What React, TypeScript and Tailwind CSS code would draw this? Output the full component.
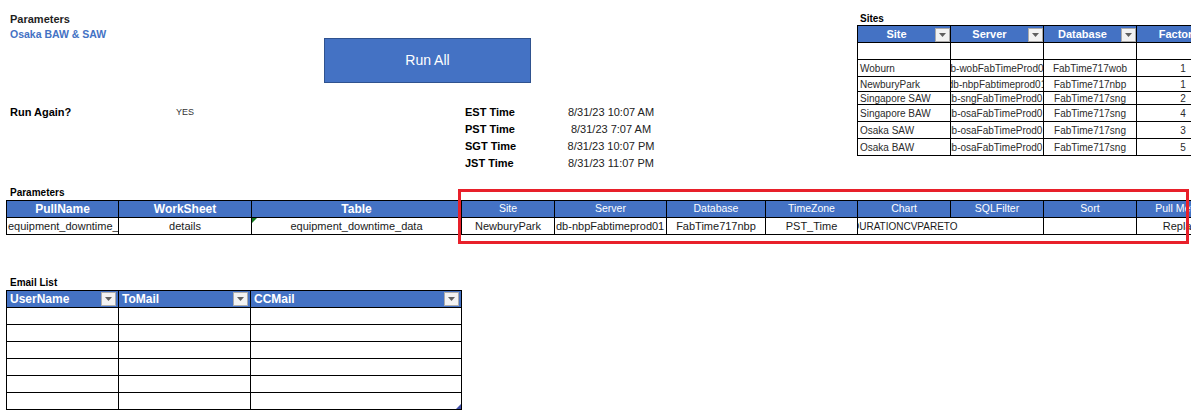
import React from "react";

const Drop = () => (
  <span className="flex h-[14px] w-[15px] shrink-0 items-center justify-center border border-[#ababab] bg-[#f2f2f2]">
    <svg width="7" height="4" viewBox="0 0 7 4">
      <path d="M0 0h7L3.5 4z" fill="#5f5f5f" />
    </svg>
  </span>
);

const sites = [
  { site: "", server: "", db: "", factor: "", h: "h-[17px]" },
  { site: "Woburn", server: "db-wobFabTimeProd01", db: "FabTime717wob", factor: "1", h: "h-[17px]" },
  { site: "NewburyPark", server: "db-nbpFabtimeprod01", db: "FabTime717nbp", factor: "1", h: "h-[15px]" },
  { site: "Singapore SAW", server: "db-sngFabTimeProd01", db: "FabTime717sng", factor: "2", h: "h-[13px]" },
  { site: "Singapore BAW", server: "db-osaFabTimeProd01", db: "FabTime717sng", factor: "4", h: "h-[17px]" },
  { site: "Osaka SAW", server: "db-osaFabTimeProd01", db: "FabTime717sng", factor: "3", h: "h-[17px]" },
  { site: "Osaka BAW", server: "db-osaFabTimeProd01", db: "FabTime717sng", factor: "5", h: "h-[17px]" },
];

const times = [
  { label: "EST Time", value: "8/31/23 10:07 AM" },
  { label: "PST Time", value: "8/31/23 7:07 AM" },
  { label: "SGT Time", value: "8/31/23 10:07 PM" },
  { label: "JST Time", value: "8/31/23 11:07 PM" },
];

const paramCols = [
  { name: "Site", w: "w-[93px]" },
  { name: "Server", w: "w-[112px]" },
  { name: "Database", w: "w-[99px]" },
  { name: "TimeZone", w: "w-[92px]" },
  { name: "Chart", w: "w-[93px]" },
  { name: "SQLFilter", w: "w-[93px]" },
  { name: "Sort", w: "w-[93px]" },
  { name: "Pull Method", w: "w-[93px]" },
];

const cell = "flex shrink-0 items-center overflow-hidden whitespace-nowrap border-r border-b border-black";

export default function App() {
  return (
    <div className="relative h-[418px] w-[1191px] overflow-hidden bg-white font-['Liberation_Sans',Arial,sans-serif] text-black">
      {/* top: parameters, button, times, sites */}
      <div className="flex h-[186px]">
        <div className="w-[857px] shrink-0 pt-[12px]">
          <div className="h-[14px] pl-[10px] text-[11px] font-bold leading-[14px] text-[#1f1f1f]">Parameters</div>
          <div className="h-[12px] pl-[10px] text-[10.5px] font-bold leading-[16px] text-[#4472c4]">Osaka BAW &amp; SAW</div>
          <div className="ml-[324px] flex h-[45px] w-[207px] items-center justify-center border border-[#2f528f] bg-[#4472c4] text-[14px] text-white">
            Run All
          </div>
          <div className="mt-[21px] flex">
            <div className="flex h-[17px] w-[465px] shrink-0 items-center pl-[10px]">
              <span className="w-[166px] text-[11px] font-bold">Run Again?</span>
              <span className="text-[9px] text-[#333]">YES</span>
            </div>
            <div className="flex flex-col">
              {times.map((t) => (
                <div key={t.label} className="flex h-[17px] items-center">
                  <span className="w-[101px] text-[11px] font-bold">{t.label}</span>
                  <span className="w-[90px] text-center text-[11px] text-[#222]">{t.value}</span>
                </div>
              ))}
            </div>
          </div>
        </div>

        <div className="shrink-0 pt-[12px]">
          <div className="h-[13px] pl-[3px] text-[10px] font-bold leading-[13px]">Sites</div>
          <div className="w-max border-l border-t border-black">
            <div className="flex h-[17px] bg-[#4472c4] text-[11px] font-bold text-white">
              {["Site", "Server", "Database", "Factor"].map((h) => (
                <div key={h} className="flex w-[93px] shrink-0 items-end border-r border-b border-black">
                  <span className="flex h-full flex-1 items-center justify-center">{h}</span>
                  <Drop />
                </div>
              ))}
            </div>
            {sites.map((s, i) => (
              <div key={i} className={`flex text-[10px] text-[#2b2b2b] ${s.h}`}>
                <div className={`${cell} w-[93px] pl-[2px]`}>{s.site}</div>
                <div className={`${cell} w-[93px] justify-center`}>{s.server}</div>
                <div className={`${cell} w-[93px] justify-center`}>{s.db}</div>
                <div className={`${cell} w-[93px] justify-center`}>{s.factor}</div>
              </div>
            ))}
          </div>
        </div>
      </div>

      {/* parameters table */}
      <div className="h-[14px] pl-[10px] text-[10px] font-bold leading-[14px]">Parameters</div>
      <div className="ml-[6px] w-max border-l border-t border-black">
        <div className="flex h-[17px] bg-[#4472c4] text-white">
          <div className={`${cell} w-[112px] justify-center text-[12px] font-bold`}>PullName</div>
          <div className={`${cell} w-[133px] justify-center text-[12px] font-bold`}>WorkSheet</div>
          <div className={`${cell} w-[210px] justify-center text-[12px] font-bold`}>Table</div>
          {paramCols.map((c) => (
            <div key={c.name} className={`${cell} ${c.w} justify-center text-[10.5px]`}>
              {c.name}
            </div>
          ))}
        </div>
        <div className="flex h-[17px] text-[11px] text-[#1a1a1a]">
          <div className={`${cell} w-[112px] pl-[1px]`}>equipment_downtime_data</div>
          <div className={`${cell} w-[133px] justify-center`}>details</div>
          <div className={`${cell} relative w-[210px] justify-center`}>
            <svg className="absolute left-0 top-0" width="5" height="5" viewBox="0 0 5 5">
              <path d="M0 0h5L0 5z" fill="#137a1f" />
            </svg>
            equipment_downtime_data
          </div>
          <div className={`${cell} w-[93px] justify-center`}>NewburyPark</div>
          <div className={`${cell} w-[112px] pl-[1px]`}>db-nbpFabtimeprod01</div>
          <div className={`${cell} w-[99px] justify-center`}>FabTime717nbp</div>
          <div className={`${cell} w-[92px] justify-center`}>PST_Time</div>
          <div className={`${cell} w-[186px] text-[10px]`}>
            <span className="ml-[-6px]">DURATIONCVPARETO</span>
          </div>
          <div className={`${cell} w-[93px]`}></div>
          <div className={`${cell} w-[93px] justify-center`}>Replace</div>
        </div>
      </div>

      {/* email list */}
      <div className="mt-[41px] h-[14px] pl-[10px] text-[10px] font-bold leading-[14px]">Email List</div>
      <div className="ml-[6px] w-max border-l border-t border-black">
        <div className="flex h-[17px] bg-[#4472c4] text-[12px] font-bold text-white">
          <div className={`${cell} w-[112px] justify-between pl-[3px] pr-[2px]`}>
            <span>UserName</span>
            <Drop />
          </div>
          <div className={`${cell} w-[132px] justify-between pl-[3px] pr-[2px]`}>
            <span>ToMail</span>
            <Drop />
          </div>
          <div className={`${cell} w-[211px] justify-between pl-[3px] pr-[2px]`}>
            <span>CCMail</span>
            <Drop />
          </div>
        </div>
        {[0, 1, 2, 3, 4, 5].map((r) => (
          <div key={r} className="flex h-[17px]">
            <div className={`${cell} w-[112px]`}></div>
            <div className={`${cell} w-[132px]`}></div>
            <div className={`${cell} relative w-[211px]`}>
              {r === 5 && (
                <svg className="absolute bottom-0 right-0" width="5" height="5" viewBox="0 0 5 5">
                  <path d="M5 0v5H0z" fill="#3f4fa8" />
                </svg>
              )}
            </div>
          </div>
        ))}
      </div>

      {/* highlight box drawn over the sheet */}
      <div className="absolute left-[458px] top-[189px] h-[55px] w-[731px] border-[3px] border-[#e8202a]"></div>
    </div>
  );
}
